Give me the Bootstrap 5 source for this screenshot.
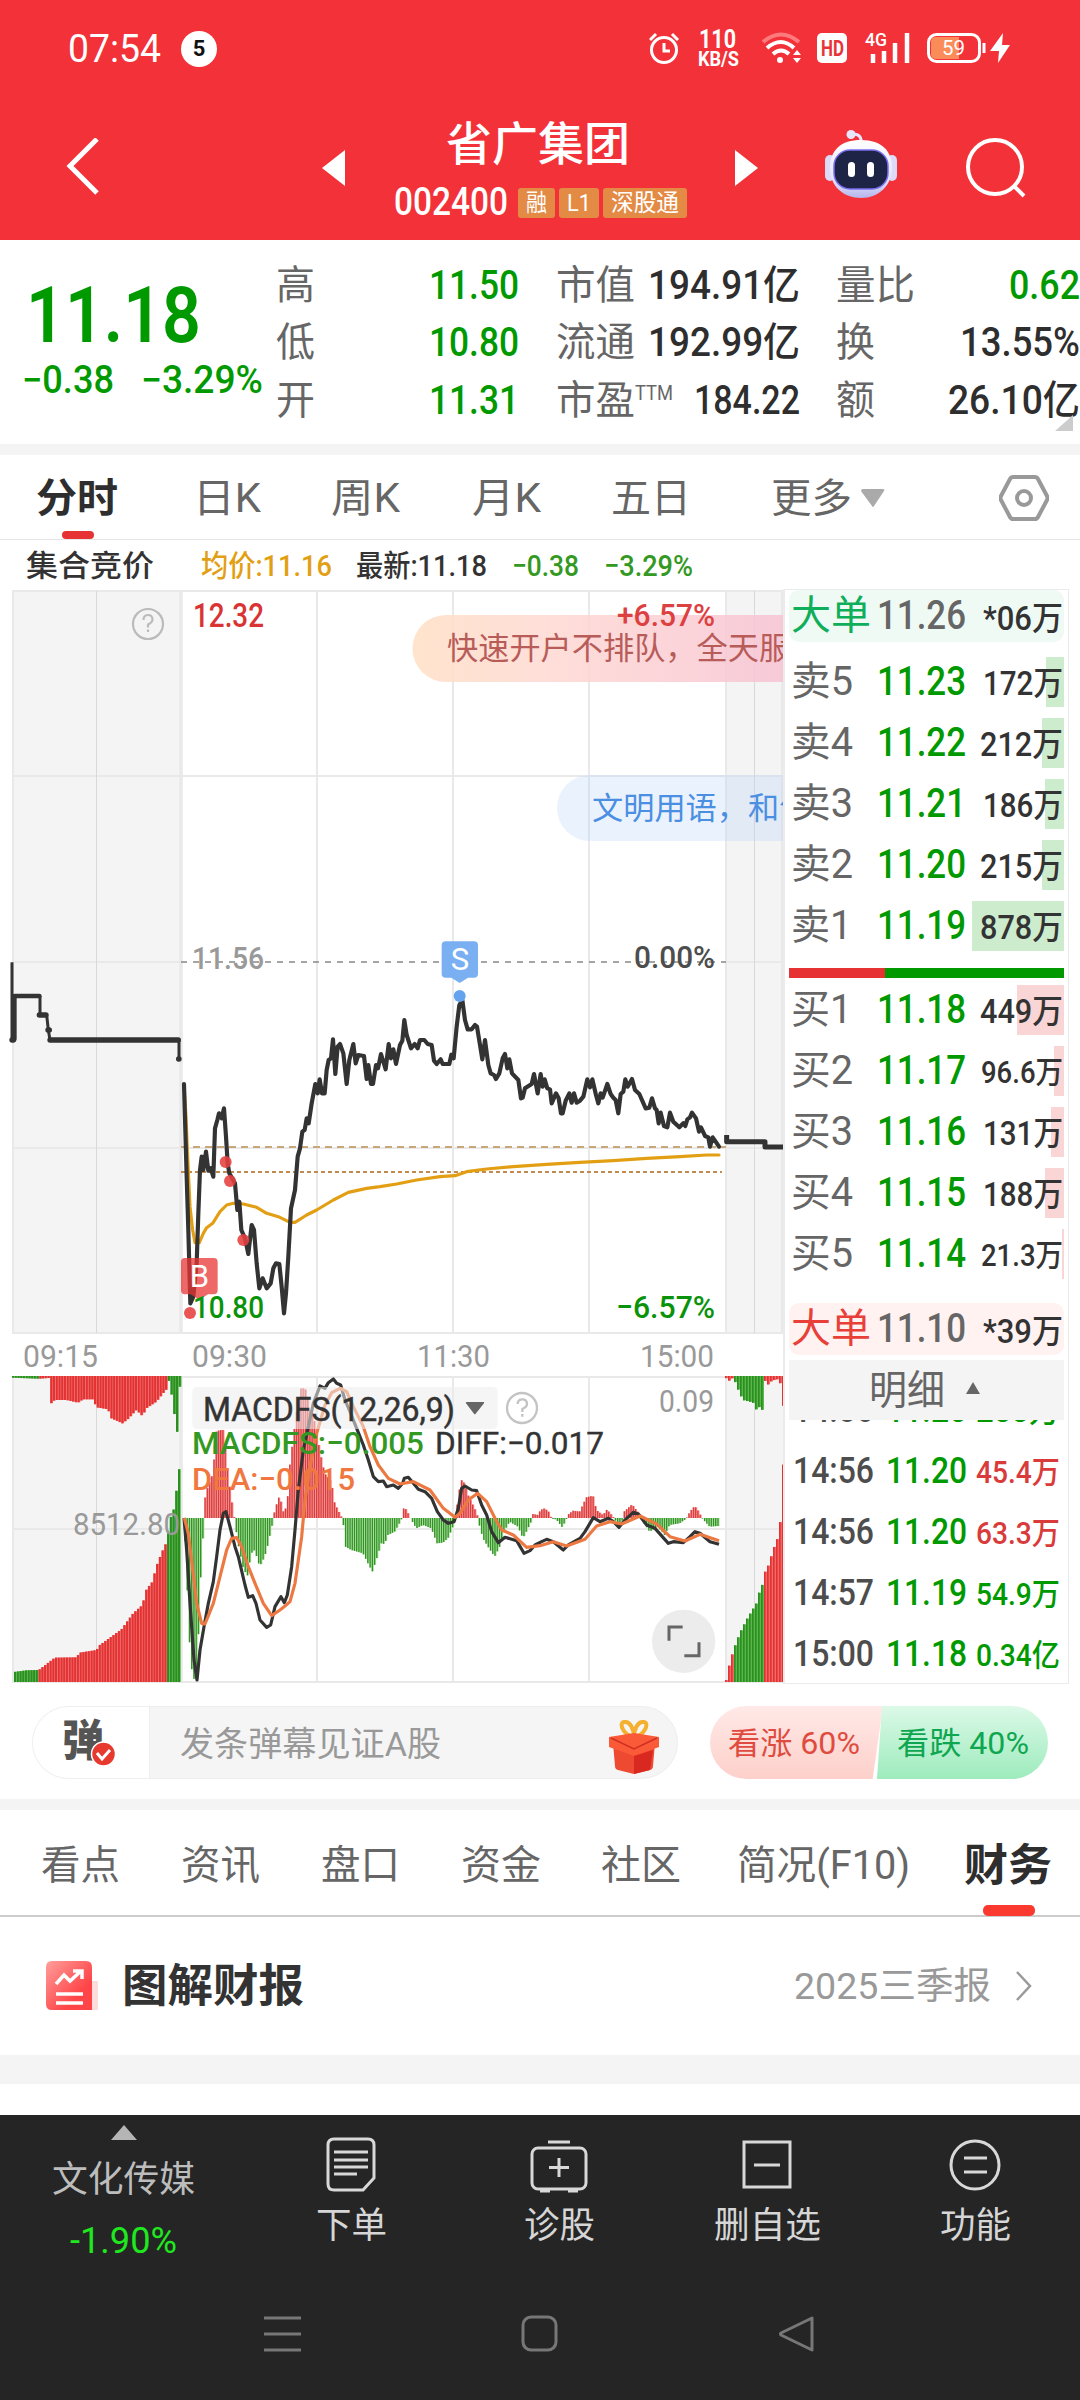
<!DOCTYPE html>
<html lang="zh-CN">
<head>
<meta charset="utf-8">
<meta name="viewport" content="width=device-width, initial-scale=1">
<title>省广集团 002400</title>
<link href="https://cdn.jsdelivr.net/npm/bootstrap@5.3.0/dist/css/bootstrap.min.css" rel="stylesheet">
<style>
:root{--dn:#009900;--up:#e63232;--ink:#333;--mid:#666}
body{width:1080px;height:2400px;overflow:hidden;background:#fff;color:var(--ink);font-family:Roboto,"Noto Sans CJK SC",sans-serif;line-height:1;font-size:40px}
svg{display:block;flex:none}
[data-w]{display:inline-block;white-space:nowrap;transform-origin:0 50%;flex:none}
.dn{color:var(--dn)}.up{color:#d93a3a}.mid{color:var(--mid)}.ink{color:#2e2e2e}
.fw5{font-weight:500}
.band{background:#f4f4f4}
.gridrow{display:grid;align-items:center;justify-items:start}
/* header */
.topbar{height:240px;background:#f23138;color:#fff}
.status{height:96px;padding:2px 70px 0 68px}
.status .clock{font-size:39px}
.dot5{width:36px;height:36px;font-size:22px;color:#111;margin-left:20px}
.titlerow{height:144px;padding-left:66px;grid-template-columns:256px 74px 339px 90px 140px auto}
.stockname{font-size:46px;line-height:52px}
.codeline{margin-top:17px;gap:4px;height:32px}
.code{font-size:39px;margin-right:6px;margin-left:-2px}
.tagx{background:#e38a45;border-radius:3px;height:30px;font-size:24px}
/* quote */
.quote{height:204px;padding-top:17px;position:relative}
.quote .side{width:277px}
.bigp{font-size:77px;height:60px;margin:29px 0 0 26px}
.chg{font-size:38px;margin:15px 0 0 22px;gap:27px}
.qcol{height:173px}
.qcol>div{height:57.6px}
.sup3{font-size:20px;margin-bottom:16px}
.corner{position:absolute;right:7px;bottom:13px}
/* tabs */
.ktabs{height:85px;padding-left:36px;padding-top:3px;grid-template-columns:157px 138px 141px 139px 160px 90px 138px 50px;border-bottom:1px solid #e6e6e6;color:var(--mid);position:relative}
.ktabs .line{position:absolute;left:62px;bottom:0;width:32px;height:8px;border-radius:4px;background:#e63232}
.legendrow{height:49px;padding-left:26px;grid-template-columns:175px 155px 156px 92px 100px;font-size:30px;padding-top:3px}
/* order book */
.book{width:286px;height:1095px;border:1px solid #ebebeb;border-left-width:2px;padding:0 4px 0 4px;overflow:hidden}
.lv{height:61px;grid-template-columns:86px 87px 1fr;padding-left:2px;position:relative}
.lv .q{justify-self:end;font-size:33px;position:relative;padding-top:4px;margin-right:1px}
.lv .q.sm{font-size:31px}
.depth{position:absolute;right:0;top:6px;height:50px}
.depth.g{background:#cdebcd}.depth.r{background:#fad5d5}
.big{height:52px;border-radius:10px}
.balance{height:10px;margin:12px 0 1px}
.detail{height:60px;background:#f4f4f4;position:relative;z-index:1}
.tk{height:61px;grid-template-columns:93px 90px auto;padding-left:4px}
.tk .t{color:#4d4d4d;font-size:37px}.tk .p{font-size:37px}.tk .q{font-size:31px;padding-top:3px}
/* comment */
.comment{height:116px;padding:23px 32px 20px}
.inputpill{width:646px;height:73px;border-radius:37px;border:1px solid #eee;background:#f5f5f5;overflow:hidden}
.inputpill .sw{width:117px;background:#fff;border-right:1px solid #eee;position:relative}
.ph{color:#999;font-size:34px;margin-left:30px;margin-top:3px}
.vote{width:338px;height:73px;border-radius:37px;overflow:hidden;font-size:31px;position:relative}
.vote>div{height:73px;padding-top:2px}
.vup{width:173px;background:linear-gradient(#ffe9e7,#fdd0ca);color:#e04b40;clip-path:polygon(0 0,100% 0,94% 100%,0 100%)}
.vdn{flex:1;background:linear-gradient(#dcf9e8,#9debbd);color:#0fa651;clip-path:polygon(5px 0,100% 0,100% 100%,0 100%);margin-left:-6px}
/* lower tabs */
.ltabs{height:107px;padding-left:41px;grid-template-columns:140px 140px 140px 140px 138px 225px 90px;border-bottom:2px solid #ccc;color:var(--mid);position:relative;padding-top:6px}
.ltabs .line{position:absolute;left:983px;bottom:-1px;width:52px;height:11px;border-radius:5px;background:#fa3a2f}
.report{height:138px;padding:0 48px 0 46px}
/* bottom */
.dock{height:285px;background:#252525;color:#d6d6d6}
.dockgrid{height:150px;display:grid;grid-template-columns:247px 208px 208px 208px 208px;font-size:36px}
.dockgrid>div{display:flex;flex-direction:column;align-items:center}
.sysnav{height:135px;padding:2px 264px 0}
</style>
</head>
<body>
<header class="topbar">
  <div class="status d-flex align-items-center">
    <span class="clock" data-w="93">07:54</span>
    <span class="dot5 bg-white rounded-circle d-flex align-items-center justify-content-center fw-bold">5</span>
    <svg class="ms-auto" width="361" height="46" viewBox="650 26 361 46" fill="none" stroke="#fff" stroke-width="3">
      <circle cx="665" cy="50" r="12.5"/><path d="M665 43v8h6M651 40l6-6M679 40l-6-6"/>
      <g fill="#fff" stroke="none" font-weight="700"><text x="700" y="48" font-size="26" textLength="37" lengthAdjust="spacingAndGlyphs">110</text>
      <text x="699" y="66" font-size="20" textLength="41" lengthAdjust="spacingAndGlyphs">KB/S</text></g>
      <path d="M764 42q18-15 36 0" stroke="#ff7a7d" stroke-width="4"/><path d="M768 48q14-12 27 0M774 54q8-7 16 0" stroke-width="4"/><circle cx="781" cy="60" r="3" fill="#fff" stroke="none"/><path d="M794 55l4-5 4 5zM794 58l4 5 4-5z" fill="#fff" stroke="none"/>
      <rect x="818" y="33" width="30" height="30" rx="5" fill="#fff" stroke="none"/><text x="822" y="56" font-size="22" font-weight="700" fill="#e8333a" stroke="none" textLength="23" lengthAdjust="spacingAndGlyphs">HD</text>
      <text x="866" y="46" font-size="19" fill="#fff" stroke="none" font-weight="500" textLength="22" lengthAdjust="spacingAndGlyphs">4G</text>
      <path d="M874 54v9M885 51v12M896 43v20M908 33v30" stroke-width="4.5"/>
      <rect x="929.5" y="34.500" width="51" height="27" rx="8"/><path d="M937 37h23v22h-23q-5 0-5-5v-12q0-5 5-5z" fill="#fa8c5a" stroke="none"/><path d="M985 43v10"/>
      <text x="943" y="55" font-size="21" fill="#fff" stroke="none" textLength="23" lengthAdjust="spacingAndGlyphs">59</text>
      <path d="M1004 33l-13 18h9l-1 12 12-18h-8z" fill="#fff" stroke="none"/>
    </svg>
  </div>
  <div class="titlerow gridrow">
    <svg width="36" height="60" viewBox="0 0 36 60" fill="none" stroke="#fff" stroke-width="5"><path d="M31 1L4 28l27 27"/></svg>
    <svg width="24" height="36" viewBox="0 0 24 36"><path d="M23 0v36L0 18z" fill="#fff"/></svg>
    <div class="w-100">
      <div class="stockname fw5"><span data-w="186" class="ms-5" style="padding-left:2px">省广集团</span></div>
      <div class="codeline d-flex align-items-center">
        <span class="code fw5" data-w="114">002400</span>
        <span class="tagx d-flex align-items-center px-2"><span data-w="21">融</span></span>
        <span class="tagx d-flex align-items-center px-2"><span data-w="24">L1</span></span>
        <span class="tagx d-flex align-items-center px-2"><span data-w="68">深股通</span></span>
      </div>
    </div>
    <svg width="24" height="36" viewBox="0 0 24 36"><path d="M0 0v36l23-18z" fill="#fff"/></svg>
    <svg width="74" height="70" viewBox="0 0 74 70" style="margin-top:-8px">
      <defs><linearGradient id="bot" x1="0" y1="0" x2="0" y2="1"><stop offset="0" stop-color="#fff"/><stop offset=".7" stop-color="#e4e2fa"/><stop offset="1" stop-color="#b4b5ee"/></linearGradient></defs>
      <path d="M36 14q1-9-8-9" fill="none" stroke="#e8e6fa" stroke-width="3"/><circle cx="26" cy="5.500" r="4.500" fill="#e8e6fa"/>
      <rect x="0" y="26" width="10" height="26" rx="5" fill="#dddaf8"/><rect x="62" y="26" width="10" height="26" rx="5" fill="#dddaf8"/>
      <path d="M36 11c21 0 31 11 31 28S54 69 36 69 5 57 5 39 16 11 36 11z" fill="url(#bot)"/>
      <rect x="9" y="21" width="54" height="39" rx="16" fill="#1d2446" stroke="#7a6df0" stroke-width="1.500"/>
      <rect x="23" y="33" width="7" height="15" rx="3.500" fill="#fff"/><rect x="42" y="33" width="7" height="15" rx="3.500" fill="#fff"/>
    </svg>
    <svg width="62" height="62" viewBox="0 0 62 62" fill="none" stroke="#fff" stroke-width="4"><circle cx="30" cy="30" r="27"/><path d="M49 49l10 10"/></svg>
  </div>
</header>

<section class="quote d-flex">
  <div class="side">
    <div class="bigp dn fw5 d-flex align-items-center"><span data-w="175" style="font-weight:600">11.18</span></div>
    <div class="chg dn fw5 d-flex"><span data-w="92">−0.38</span><span data-w="122">−3.29%</span></div>
  </div>
  <div class="qcol mid" style="width:243px;margin-left:-1px">
    <div class="d-flex align-items-center justify-content-between"><span data-w="39">高</span><span class="dn fw5" data-w="90">11.50</span></div>
    <div class="d-flex align-items-center justify-content-between"><span data-w="39">低</span><span class="dn fw5" data-w="90">10.80</span></div>
    <div class="d-flex align-items-center justify-content-between"><span data-w="39">开</span><span class="dn fw5" data-w="90">11.31</span></div>
  </div>
  <div class="qcol mid" style="width:244px;margin-left:37px">
    <div class="d-flex align-items-center justify-content-between"><span data-w="79">市值</span><span class="ink fw5" data-w="152">194.91亿</span></div>
    <div class="d-flex align-items-center justify-content-between"><span data-w="79">流通</span><span class="ink fw5" data-w="152">192.99亿</span></div>
    <div class="d-flex align-items-center"><span data-w="79">市盈</span><span class="sup3" data-w="38">TTM</span><span class="ink fw5 ms-auto" data-w="106">184.22</span></div>
  </div>
  <div class="qcol mid" style="width:244px;margin-left:36px">
    <div class="d-flex align-items-center justify-content-between"><span data-w="79">量比</span><span class="dn fw5" data-w="71">0.62</span></div>
    <div class="d-flex align-items-center justify-content-between"><span data-w="39">换</span><span class="ink fw5" data-w="120">13.55%</span></div>
    <div class="d-flex align-items-center justify-content-between"><span data-w="39">额</span><span class="ink fw5" data-w="132">26.10亿</span></div>
  </div>
  <svg class="corner" width="18" height="16" viewBox="0 0 18 16"><path d="M18 0v16H0z" fill="#ccc"/></svg>
</section>
<div class="band" style="height:11px"></div>

<nav class="ktabs gridrow">
  <span class="fw-bold ink" data-w="82">分时</span><span data-w="68">日K</span><span data-w="69">周K</span><span data-w="69">月K</span><span data-w="80">五日</span><span data-w="81">更多</span>
  <svg width="24" height="19" viewBox="0 0 24 19"><path d="M0 2Q0 0 2 0h20q2 0 1 2L13 17q-1 2-2 0z" fill="#aaa"/></svg>
  <svg width="50" height="48" viewBox="0 0 50 48" fill="none" stroke="#999" stroke-width="4"><path d="M14 2h22q2 0 3 2l9 17q1 2 0 4l-9 17q-1 2-3 2H14q-2 0-3-2L2 25q-1-2 0-4l9-17q1-2 3-2z"/><circle cx="25" cy="23" r="7"/></svg>
  <i class="line"></i>
</nav>
<div class="legendrow gridrow">
  <span data-w="128" class="fw5">集合竞价</span><span data-w="131" style="color:#e39f14" class="fw5">均价:11.16</span><span data-w="131" class="fw5">最新:11.18</span><span data-w="67" style="color:#339922" class="fw5">−0.38</span><span data-w="89" style="color:#339922" class="fw5">−3.29%</span>
</div>

<main class="d-flex" style="height:1094px">
  <svg id="chart" width="783" height="1094" viewBox="0 589 783 1094">
    <defs><linearGradient id="pinkpill"><stop offset="0" stop-color="#ffdfc4"/><stop offset=".35" stop-color="#ffd9d2"/><stop offset="1" stop-color="#f7c3d3"/></linearGradient></defs>
    <path d="M13 591h168v742H13zM726 591h57v742h-57zM13 1377h168v305H13zM726 1377h57v305h-57z" fill="#f4f4f4"/>
    <g stroke="#e9e9e9" stroke-width="2" fill="none">
      <path d="M12 591H783M12 776H783M12 962H181M726 962H783M12 1148H783M12 1333H783M12 1377H783M12 1529H783M12 1682H783"/>
      <path d="M13 591V1333M317 591V1333M453 591V1333M589 591V1333M726 591V1333M782 591V1333M13 1377V1682M317 1377V1682M453 1377V1682M589 1377V1682M726 1377V1682"/>
      <path d="M181 591V1333M181 1377V1682" stroke-width="3.500"/>
      <path d="M96.500 591V1333M754.500 591V1333M96.500 1377V1682M754.500 1377V1682" stroke="#d9d9d9" stroke-width="1"/>
    </g>
    <path d="M181 962H726" stroke="#888" stroke-width="1.600" stroke-dasharray="6 6"/>
    <path d="M181 1147H726" stroke="#c8a878" stroke-width="2" stroke-dasharray="7 5"/>
    <path d="M181 1172H722" stroke="#c08a50" stroke-width="2" stroke-dasharray="4 3"/>
    <g font-size="29" font-weight="500">
      <text x="193" y="627" fill="#d93333" font-size="33" textLength="71" lengthAdjust="spacingAndGlyphs">12.32</text>
      <text x="192" y="969" fill="#999" font-size="32" textLength="72" lengthAdjust="spacingAndGlyphs">11.56</text>
      <text x="634" y="968" fill="#4d4d4d" font-size="32" textLength="81" lengthAdjust="spacingAndGlyphs">0.00%</text>
      <text x="616" y="1318" fill="#0a930a" font-size="32" textLength="99" lengthAdjust="spacingAndGlyphs">−6.57%</text>
    </g>
    <g fill="none" stroke="#bbb" stroke-width="2.200"><circle cx="148" cy="624" r="15"/><path d="M143.500 620q0-5 4.500-5t4.500 4.500q0 3-4.500 5v3M148 629.500v2.500"/></g>
    <g transform="translate(0 930) scale(.33333)" fill="none" stroke-linejoin="round" stroke-linecap="round">
      <g stroke="#333"><path d="M36 97V330M120 198V255M140 255L145 300L150 330M537 330V387" stroke-width="9" stroke-linecap="butt"/>
      <path d="M43 328V198H118" stroke-width="14"/><path d="M118 255h20M144 300h4M150 330H535M36 330h4M536 387h1" stroke-width="16"/></g>
      <g transform="translate(1140 0)" stroke="#333" stroke-width="15" stroke-linecap="butt"><path d="M1040 615V635H1155V651H1212"/></g>
      <path id="avg" stroke="#e39f14" stroke-width="9.500"/>
      <path id="price" stroke="#333" stroke-width="12.500"/>
      <g fill="#e63f3f" fill-opacity=".88"><circle cx="677" cy="696" r="18"/><circle cx="690" cy="753" r="18"/><circle cx="730" cy="930" r="18"/><circle cx="570" cy="1149" r="18"/></g>
      <path d="M555 984h86q12 0 12 12v85q0 12-12 12H624l-26 16-26-16H555q-12 0-12-12v-85q0-12 12-12z" fill="#e83535" fill-opacity=".75"/>
      <g transform="translate(1140 0)"><path d="M197 34h85q12 0 12 12v85q0 12-12 12H264l-25 16-25-16H197q-12 0-12-12V46q0-12 12-12z" fill="#7ab0f2"/><circle cx="239" cy="198" r="18" fill="#66a3ee"/></g>
    </g>
    <text x="199.500" y="1287" font-size="31" fill="#fff" text-anchor="middle">B</text>
    <text x="460" y="970" font-size="31" fill="#fff" text-anchor="middle">S</text>
    <text x="193" y="1318" font-size="32" font-weight="500" fill="#0a930a" textLength="71" lengthAdjust="spacingAndGlyphs">10.80</text>
    <path d="M783 615H446a33.500 33.500 0 0 0 0 67H783z" fill="url(#pinkpill)" fill-opacity=".85"/>
    <text x="447" y="659" font-size="31.200" fill="#b85c5a">快速开户不排队，全天服</text>
    <text x="617" y="626" fill="#dd4040" font-size="32" font-weight="500" textLength="98" lengthAdjust="spacingAndGlyphs">+6.57%</text>
    <path d="M783 775H590a33 33 0 0 0 0 66H783z" fill="#b9d4f7" fill-opacity=".3"/>
    <text x="592" y="819" font-size="31.200" fill="#4a8fe2">文明用语，和气</text>
    <g font-size="32" fill="#999">
      <text x="23" y="1367" textLength="75" lengthAdjust="spacingAndGlyphs">09:15</text><text x="192" y="1367" textLength="75" lengthAdjust="spacingAndGlyphs">09:30</text>
      <text x="417" y="1367" textLength="73" lengthAdjust="spacingAndGlyphs">11:30</text><text x="640" y="1367" textLength="74" lengthAdjust="spacingAndGlyphs">15:00</text>
    </g>
    <g transform="translate(0 1350) scale(.33333)">
      <g id="bars"></g>
      <g fill="none" stroke-linejoin="round"><path id="diff" stroke="#333" stroke-width="9.500"/><path id="dea" stroke="#ec7842" stroke-width="9.500"/></g>
      <rect x="577" y="111" width="916" height="126" rx="14" fill="#ececec" fill-opacity=".55"/>
      <path d="M1400 156h50q4 0 2 4l-25 31q-2 3-5 0l-24-31q-2-4 2-4z" fill="#666"/>
      <g fill="none" stroke="#c4c4c4" stroke-width="7"><circle cx="1566" cy="174" r="45"/><path d="M1553 162q0-14 14-14t14 14q0 9-14 15v9M1567 192v8"/></g>
      <circle cx="2051" cy="874" r="95" fill="#ececec"/>
      <path d="M2048 831h-41v41M2053 917h44v-40" fill="none" stroke="#666" stroke-width="9"/>
    </g>
    <g font-size="33" fill="#333" font-weight="500">
      <text x="203" y="1421" textLength="252" lengthAdjust="spacingAndGlyphs" font-weight="400" stroke="#333" stroke-width=".5">MACDFS(12,26,9)</text>
      <text x="192" y="1454" fill="#339922" font-size="32" textLength="232" lengthAdjust="spacingAndGlyphs">MACDFS:−0.005</text>
      <text x="435" y="1454" font-size="32" textLength="169" lengthAdjust="spacingAndGlyphs" font-weight="400" stroke="#333" stroke-width=".4">DIFF:−0.017</text>
      <text x="192" y="1490" fill="#f07840" font-size="32" textLength="163" lengthAdjust="spacingAndGlyphs">DEA:−0.015</text>
      <text x="659" y="1412" font-size="32" font-weight="400" fill="#999" textLength="55" lengthAdjust="spacingAndGlyphs">0.09</text>
      <text x="73" y="1535" font-size="32" fill="#999" font-weight="400" textLength="107" lengthAdjust="spacingAndGlyphs">8512.80</text>
    </g>
  </svg>
  <aside class="book">
    <div class="lv gridrow big" style="background:#f0faf5"><span data-w="80" style="color:#0fae5a">大单</span><span class="mid fw5" data-w="89">11.26</span><span class="q fw5" data-w="80">*06万</span></div>
    <div style="height:9px"></div>
    <div id="asks"></div>
    <div class="balance d-flex"><div style="width:96px;background:#e63232"></div><div class="flex-fill" style="background:#009900"></div></div>
    <div id="bids"></div>
    <div class="lv gridrow big" style="background:#fff2f1;margin-top:19px"><span data-w="80" style="color:#e84038">大单</span><span class="mid fw5" data-w="89">11.10</span><span class="q fw5" data-w="80">*39万</span></div>
    <div style="height:5px"></div>
    <div class="detail d-flex align-items-center justify-content-center mid" style="padding:2px 4px 0 0"><span data-w="76">明细</span><svg style="margin:-6px 0 0 21px" width="14" height="12" viewBox="0 0 14 12"><path d="M7 0l7 12H0z" fill="#666"/></svg></div>
    <div id="ticks" style="margin-top:-41px"></div>
  </aside>
</main>

<section class="comment d-flex justify-content-between">
  <div class="inputpill d-flex align-items-center">
    <div class="sw h-100">
      <svg width="117" height="71" viewBox="33 1707 117 71"><text x="62" y="1756" font-size="43" font-weight="900" fill="#555" textLength="42" lengthAdjust="spacingAndGlyphs">弹</text><circle cx="103.500" cy="1754" r="12" fill="#e8392f" stroke="#fff" stroke-width="1.500"/><path d="M97 1753l5 6 8-9" fill="none" stroke="#fff" stroke-width="3"/></svg>
    </div>
    <span class="ph" data-w="261">发条弹幕见证A股</span>
    <svg class="ms-auto" style="margin:9px 18px 0 0" width="50" height="54" viewBox="0 0 50 54">
      <g fill="none" stroke="#f5b030" stroke-width="4"><path d="M25 17C15 16 9 3 15 2s10 7 10 15zM25 17c10-1 16-14 10-15s-10 7-10 15z"/></g>
      <path d="M4 23l21 9 21-9-2 23q0 3-3 4l-16 4-16-4q-3-1-3-4z" fill="#ee4a32"/><path d="M0 17l25-4 25 4v10l-25 9L0 27z" fill="#fb5a38"/><path d="M2 18l23 11 23-11" fill="none" stroke="#d02f22" stroke-width="1.500"/><path d="M25 36v18l16-4 3-20z" fill="#d9281f"/>
    </svg>
  </div>
  <div class="vote d-flex">
    <div class="vup d-flex align-items-center"><span style="margin-left:18px" data-w="132">看涨 60%</span></div>
    <div class="vdn d-flex align-items-center"><span style="margin-left:20px" data-w="132">看跌 40%</span></div>
  </div>
</section>
<div class="band" style="height:11px"></div>

<nav class="ltabs gridrow">
  <span data-w="79">看点</span><span data-w="79">资讯</span><span data-w="79">盘口</span><span data-w="80">资金</span><span data-w="80">社区</span><span data-w="173" style="margin-left:-2px">简况(F10)</span><span class="fw-bold ink" style="font-size:44px" data-w="88">财务</span>
  <i class="line"></i>
</nav>
<section class="report d-flex align-items-center">
  <svg width="54" height="50" viewBox="0 0 54 50">
    <defs><linearGradient id="rp" x1="0" y1="0" x2="1" y2="1"><stop offset="0" stop-color="#ff9f9c"/><stop offset=".7" stop-color="#ff4548"/></linearGradient></defs>
    <path d="M45 20h7v29h-7z" fill="#ffdcdc"/><path d="M6 0h34q6 0 6 6v43H6q-6 0-6-6V6q0-6 6-6z" fill="url(#rp)"/>
    <path d="M10 23l8-9 6 6 11-10M27 10h9v8M10 33h27M10 42h27" fill="none" stroke="#fff" stroke-width="3.500"/>
  </svg>
  <span class="fw-bold" style="font-size:45px;margin-left:22px" data-w="182">图解财报</span>
  <span class="ms-auto" style="color:#999;font-size:37px" data-w="197">2025三季报</span>
  <svg style="margin-left:25px" width="16" height="30" viewBox="0 0 16 30" fill="none" stroke="#999" stroke-width="2.500"><path d="M1 1l13 14L1 29"/></svg>
</section>
<div class="band" style="height:29px"></div>
<div style="height:31px"></div>

<footer class="dock">
  <div class="dockgrid">
    <div><svg style="margin-top:10px" width="26" height="15" viewBox="0 0 26 15"><path d="M13 0l13 15H0z" fill="#b5b5b5"/></svg><span data-w="143" style="margin-top:22px;color:#bdbdbd">文化传媒</span><span data-w="107" style="margin-top:25px;color:#1fe81f;font-size:36px">-1.90%</span></div>
    <div><svg style="margin-top:22px" width="50" height="56" viewBox="0 0 50 56" fill="none" stroke="#d8d8d8" stroke-width="3"><path d="M8 2h34q6 0 6 6v33L37 53H8q-6 0-6-6V8q0-6 6-6zM8 15h34M8 23h34M8 30h34M8 37h23"/></svg><span data-w="71" style="margin-top:15px">下单</span></div>
    <div><svg style="margin-top:22px" width="58" height="56" viewBox="0 0 58 56" fill="none" stroke="#d8d8d8" stroke-width="3"><rect x="2" y="11" width="54" height="41" rx="6"/><path d="M18 5h22M29 21v19M19 30.500h20M10 54h10M38 54h10"/></svg><span data-w="71" style="margin-top:15px">诊股</span></div>
    <div><svg style="margin-top:22px" width="52" height="56" viewBox="0 0 52 56" fill="none" stroke="#d8d8d8" stroke-width="3"><path d="M3 5h46v45H3zM13 28h26"/></svg><span data-w="107" style="margin-top:15px">删自选</span></div>
    <div><svg style="margin-top:22px" width="52" height="56" viewBox="0 0 52 56" fill="none" stroke="#d8d8d8" stroke-width="3"><circle cx="26" cy="28" r="24"/><path d="M15 21h23M15 35h23"/></svg><span data-w="71" style="margin-top:15px">功能</span></div>
  </div>
  <div class="sysnav d-flex align-items-center justify-content-between">
    <svg width="38" height="38" viewBox="0 0 38 38" stroke="#777" stroke-width="3"><path d="M0 3h37M0 19h37M0 35h37"/></svg>
    <svg width="38" height="38" viewBox="0 0 38 38" fill="none" stroke="#777" stroke-width="3"><rect x="2" y="2" width="33" height="33" rx="8"/></svg>
    <svg width="38" height="38" viewBox="0 0 38 38" fill="none" stroke="#777" stroke-width="3" stroke-linejoin="round"><path d="M34 3v32L3 20q-1-1 0-2z"/></svg>
  </div>
</footer>

<script src="https://cdn.jsdelivr.net/npm/bootstrap@5.3.0/dist/js/bootstrap.bundle.min.js"></script>
<script>
const level=(side,cls)=>([n,p,q,w,d,lw])=>`<div class="lv gridrow"><i class="depth ${cls}" style="width:${d}px"></i><span class="mid" data-w="${lw||62}">${side}${n}</span><span class="dn fw5" data-w="89">${p}</span><span class="q fw5 ${q.includes('.')?'sm':''}" data-w="${w}">${q}</span></div>`;
asks.innerHTML=[[5,'11.23','172万',80,18],[4,'11.22','212万',83,22],[3,'11.21','186万',80,19],[2,'11.20','215万',83,22],[1,'11.19','878万',83,92,61]].map(level('卖','g')).join('');
bids.innerHTML=[[1,'11.18','449万',83,47,61],[2,'11.17','96.6万',82,10],[3,'11.16','131万',80,13],[4,'11.15','188万',80,19],[5,'11.14','21.3万',82,2]].map(level('买','r')).join('');
ticks.innerHTML=[['14:56','11.20','200万','dn'],['14:56','11.20','45.4万','up'],['14:56','11.20','63.3万','up'],['14:57','11.19','54.9万','dn'],['15:00','11.18','0.34亿','dn']].map(([t,p,q,c])=>`<div class="tk gridrow"><span class="t fw5" data-w="81">${t}</span><span class="p fw5 dn" data-w="81">${p}</span><span class="q fw5 ${c}" data-w="84">${q}</span></div>`).join('');

/* squeeze Roboto figures to the narrow widths of the quote face */
document.fonts.ready.then(()=>document.querySelectorAll('[data-w]').forEach(e=>{
  const n=e.getBoundingClientRect().width,w=+e.dataset.w;
  e.style.transform=`scaleX(${w/n})`;
  e.style.marginRight=(parseFloat(getComputedStyle(e).marginRight)+w-n)+'px';
}));

const pts=s=>s.trim().split(/\s+/).map(p=>p.split(',').map(Number));
const join=(a,b)=>pts(a).concat(pts(b).map(([x,y])=>[x+1140,y]));
const toPath=a=>'M'+a.map(p=>p.join(' ')).join('L');
price.setAttribute('d',toPath(join(
`552,462 556,600 560,740 565,900 571,1120 580,1100 590,1000 595,850 600,720 605,680 610,720 618,665 625,722 632,715 640,740 645,595 652,570 657,550 665,565 672,535 678,620 683,700 688,730 705,760 712,840 718,815 724,900 735,925 745,972 755,885 762,900 770,1000 778,1075 788,1045 800,1075 812,1060 820,1015 828,1000 838,1002 845,1070 852,1150 858,1090 865,980 873,835 885,780 893,680 900,655 907,605 914,600 920,565 926,580 935,520 946,462 953,490 959,448 966,490 974,490 980,420 986,390 993,385 999,328 1006,432 1013,350 1020,342 1030,370 1040,462 1048,390 1060,342 1067,400 1075,375 1092,378 1100,447 1105,405 1113,462 1119,462 1128,405 1134,415`,
`3,372 17,418 26,342 33,385 40,358 48,402 60,345 67,332 73,270 80,315 93,355 104,342 113,355 120,330 133,330 143,342 155,345 162,392 170,402 182,388 188,402 208,402 214,374 221,385 230,290 238,225 247,210 255,270 263,298 275,298 285,285 291,290 300,345 307,388 315,330 325,405 332,430 342,435 348,447 358,430 368,385 375,372 382,415 388,388 396,430 415,450 423,505 428,503 435,475 455,462 462,432 473,490 482,432 488,470 494,448 502,475 510,478 515,520 528,490 536,505 543,550 548,550 557,512 568,490 575,518 582,490 590,518 600,512 610,500 622,448 630,472 637,448 648,495 655,520 662,490 668,503 682,462 692,492 700,503 707,510 715,550 722,492 730,485 736,448 743,470 756,447 765,480 778,492 797,535 808,533 816,505 825,535 830,540 836,580 842,548 852,588 862,592 870,548 880,575 898,592 910,580 916,588 922,568 930,562 936,548 948,565 957,605 963,592 975,618 985,622 990,650 998,622 1005,632 1017,650`)));
avg.setAttribute('d',toPath(join(
`552,465 558,560 563,680 570,830 578,900 585,938 598,938 610,910 620,893 638,880 660,845 680,825 700,820 730,822 770,832 800,850 835,860 870,877 885,877 920,855 950,840 1000,810 1045,787 1100,775`,
`0,770 50,762 110,750 180,740 225,737 260,725 320,717 400,710 500,703 600,697 700,692 800,685 900,680 980,675 1017,675`)));
diff.setAttribute('d',toPath(join(
`552,504 560,600 570,760 582,930 591,990 600,900 612,830 625,760 640,695 650,620 660,540 670,490 678,485 690,530 705,590 715,620 722,650 735,705 745,742 758,737 768,760 780,810 800,832 812,825 825,770 843,740 853,758 862,735 875,650 885,540 895,420 910,300 925,230 940,160 960,108 975,115 985,98 1000,87 1010,100 1022,105 1035,150 1050,185 1070,235 1090,285 1105,330 1120,380 1135,395`,
`10,393 20,410 40,405 55,415 68,400 73,385 85,382 100,400 115,418 135,425 155,445 172,485 190,510 205,520 222,515 235,475 245,415 255,408 275,420 290,422 305,465 320,495 335,545 355,578 375,562 410,572 432,610 450,602 465,585 485,575 500,568 520,575 550,600 565,585 600,565 615,545 640,503 660,515 685,505 700,515 717,532 735,510 760,487 775,492 800,525 825,535 865,580 880,575 910,578 930,560 945,545 960,550 990,575 1017,583`)));
dea.setAttribute('d',toPath(join(
`553,504 565,550 577,650 590,760 605,820 615,822 640,760 660,680 680,600 695,565 710,563 725,590 745,650 765,700 790,760 815,797 840,780 855,768 870,755 885,700 905,560 915,450 930,350 950,250 975,165 995,128 1020,115 1040,125 1060,170 1090,230 1110,290 1135,345`,
`25,385 60,402 100,395 150,420 190,475 225,502 240,490 265,450 293,430 320,455 345,505 365,540 400,555 440,592 480,587 520,575 560,588 615,568 650,528 690,515 725,522 780,498 830,522 870,560 915,573 960,553 1017,572`)));

/* columns sampled from an envelope polyline */
function columns(env,base,step,from,to,colour,w){
  let out='',i=0;
  for(let x=from;x<to;x+=step){
    const c=x+step/2;
    while(i<env.length-2&&env[i+1][0]<c)i++;
    const [x0,y0]=env[i],[x1,y1]=env[i+1];
    const y=y0+(y1-y0)*Math.max(0,Math.min(1,(c-x0)/(x1-x0||1)));
    const [a,b]=colour(c,y);
    out+=`<rect x="${x.toFixed(1)}" y="${Math.min(base,y).toFixed(1)}" width="${step}" height="${Math.abs(y-base).toFixed(1)}" fill="${b}"/><rect x="${x.toFixed(1)}" y="${Math.min(base,y).toFixed(1)}" width="${w}" height="${Math.abs(y-base).toFixed(1)}" fill="${a}"/>`;
  }
  return out;
}
const R=['#e23232','#f36a6a'],G=['#2a8f20','#5cb84c'];
const left=x=>x<117||x>505?G:R, right=x=>x<2199||x>2295?R:G;
let h='';
h+=columns(pts(`36,83 117,86 147,84 149,165 165,150 200,150 235,158 250,148 280,148 290,172 325,178 335,205 368,220 385,207 410,180 428,198 440,175 455,165 470,155 490,130 503,115 507,90 516,135 525,200 532,248 537,110 543,110`),78,8.2,36,541,left,6);
h+=columns(pts(`42,966 80,961 117,960 165,923 230,922 240,908 290,900 300,885 365,838 400,790 428,765 440,718 458,695 470,648 485,610 503,570 510,510 525,470 532,402 541,337`),996,8.2,42,541,left,6);
h+=columns(join('2170,82',`1038,82 1046,95 1054,85 1062,85 1070,105 1080,130 1090,150 1110,155 1125,160 1132,188 1141,165 1150,185 1156,92 1167,105 1176,92 1200,86 1209,167 1212,167`),78,9,2175,2350,right,5);
h+=columns(join('2170,996',`1040,990 1046,957 1054,925 1062,898 1080,850 1100,810 1130,760 1142,715 1150,700 1158,657 1167,645 1180,600 1200,548 1207,400 1212,320`),996,9,2175,2350,right,5);
h+=columns(join(
`553,504 560,650 566,790 572,930 580,980 587,995 594,925 600,750 607,600 614,515 617,430 625,410 640,370 650,245 660,240 672,240 685,375 693,430 700,480 705,510 715,580 730,650 743,680 755,610 765,600 780,650 790,630 800,605 810,560 820,515 825,480 840,435 850,485 862,470 870,350 885,230 893,170 905,112 920,120 930,180 940,190 955,270 965,325 975,370 995,395 1005,460 1025,500 1030,510 1037,590 1055,600 1090,610 1105,640 1118,665 1130,630`,
`5,580 15,582 25,555 45,545 65,510 70,475 80,478 90,500 95,510 110,535 130,525 155,535 172,580 190,578 205,565 220,530 228,508 235,440 245,390 255,400 265,435 285,475 295,502 300,530 310,565 325,590 345,620 360,590 370,550 390,515 415,530 430,565 440,545 458,508 460,492 475,495 482,480 495,475 510,488 515,506 530,508 548,532 560,508 565,494 580,482 600,485 620,442 640,437 650,480 670,495 682,478 700,500 705,508 720,530 730,506 733,485 757,463 770,480 785,498 790,515 810,545 835,530 855,555 870,525 900,520 920,506 925,495 940,472 950,472 965,500 970,508 990,530 1017,528`),
504,6.69,553,2157,(x,y)=>y<504?['#d43f3f','#ff9090']:['#2f9422','#b4e0a8'],4);
bars.innerHTML=h;
</script>
</body>
</html>
